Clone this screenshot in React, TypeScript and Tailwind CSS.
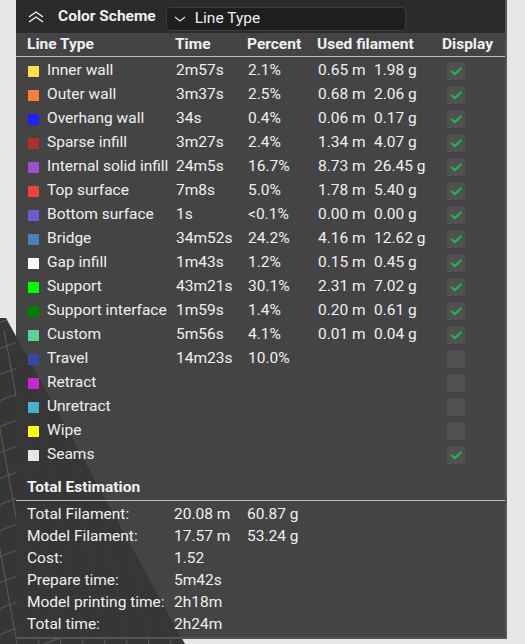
import { Check } from 'lucide-react';

interface LineRow {
    name: string;
    color: string;
    time?: string;
    percent?: string;
    meters?: string;
    grams?: string;
    shown: boolean;
}

const rows: LineRow[] = [
    { name: 'Inner wall', color: '#FFE04A', time: '2m57s', percent: '2.1%', meters: '0.65 m', grams: '1.98 g', shown: true },
    { name: 'Outer wall', color: '#FF7F38', time: '3m37s', percent: '2.5%', meters: '0.68 m', grams: '2.06 g', shown: true },
    { name: 'Overhang wall', color: '#1F1FFF', time: '34s', percent: '0.4%', meters: '0.06 m', grams: '0.17 g', shown: true },
    { name: 'Sparse infill', color: '#B03029', time: '3m27s', percent: '2.4%', meters: '1.34 m', grams: '4.07 g', shown: true },
    { name: 'Internal solid infill', color: '#9654CC', time: '24m5s', percent: '16.7%', meters: '8.73 m', grams: '26.45 g', shown: true },
    { name: 'Top surface', color: '#F04040', time: '7m8s', percent: '5.0%', meters: '1.78 m', grams: '5.40 g', shown: true },
    { name: 'Bottom surface', color: '#6D5BD0', time: '1s', percent: '<0.1%', meters: '0.00 m', grams: '0.00 g', shown: true },
    { name: 'Bridge', color: '#4D80BA', time: '34m52s', percent: '24.2%', meters: '4.16 m', grams: '12.62 g', shown: true },
    { name: 'Gap infill', color: '#FFFFFF', time: '1m43s', percent: '1.2%', meters: '0.15 m', grams: '0.45 g', shown: true },
    { name: 'Support', color: '#00FF00', time: '43m21s', percent: '30.1%', meters: '2.31 m', grams: '7.02 g', shown: true },
    { name: 'Support interface', color: '#008000', time: '1m59s', percent: '1.4%', meters: '0.20 m', grams: '0.61 g', shown: true },
    { name: 'Custom', color: '#5ED194', time: '5m56s', percent: '4.1%', meters: '0.01 m', grams: '0.04 g', shown: true },
    { name: 'Travel', color: '#3846A8', time: '14m23s', percent: '10.0%', shown: false },
    { name: 'Retract', color: '#CC22D8', shown: false },
    { name: 'Unretract', color: '#48B0D0', shown: false },
    { name: 'Wipe', color: '#FFFF00', shown: false },
    { name: 'Seams', color: '#E6E6E6', shown: true },
];

const totals = [
    { label: 'Total Filament:', value: '20.08 m', extra: '60.87 g' },
    { label: 'Model Filament:', value: '17.57 m', extra: '53.24 g' },
    { label: 'Cost:', value: '1.52' },
    { label: 'Prepare time:', value: '5m42s' },
    { label: 'Model printing time:', value: '2h18m' },
    { label: 'Total time:', value: '2h24m' },
];

const cols = 'grid grid-cols-[148px_72px_70px_56px_69px_1fr] items-center';

// build plate peeking out from under the legend, bottom-left of the viewport
function BuildPlate() {
    const lines = [];
    for (let i = 0; i < 14; i++) {
        lines.push(<line key={`a${i}`} x1={-20} y1={330 + i * 26} x2={60} y2={300 + i * 26} />);
        lines.push(<line key={`b${i}`} x1={-40 + i * 22} y1={330} x2={20 + i * 22} y2={660} />);
    }
    return (
        <svg className="absolute inset-0" width="525" height="644" viewBox="0 0 525 644">
            <defs>
                <clipPath id="plate">
                    <polygon points="0,318 6,318 185,644 0,644" />
                </clipPath>
            </defs>
            <g clipPath="url(#plate)">
                <rect x="0" y="300" width="200" height="344" fill="#363636" />
                <g stroke="#5c5c5c" strokeWidth="1">{lines}</g>
            </g>
        </svg>
    );
}

function Swatch({ color }: { color: string }) {
    return <span className="h-[11px] w-[11px] shrink-0" style={{ backgroundColor: color }} />;
}

function Toggle({ on }: { on: boolean }) {
    return (
        <span className="ml-1 flex h-[18px] w-[18px] items-center justify-center rounded-[2px] bg-[#505050]">
            {on && <Check size={13} strokeWidth={4} className="text-[#1fb24f]" />}
        </span>
    );
}

export default function App() {
    return (
        <div className="relative h-[644px] w-[525px] overflow-hidden bg-[#e7e7e7] font-['Roboto',sans-serif] text-[15.5px] text-[#f0f0f0]">
            <BuildPlate />

            <div className="relative ml-4 h-[639px] w-[491px] border-r-2 border-b-2 border-[#555555] bg-[#363636]/[0.92]">
                {/* Header: title + scheme picker */}
                <div className="flex h-[33px] items-center bg-[#262626]/80 pl-3">
                    <svg width="16" height="12" viewBox="0 0 16 12" fill="none" stroke="#f0f0f0" strokeWidth="1.4">
                        <polyline points="1,6 8,1 15,6" />
                        <polyline points="1,11 8,6 15,11" />
                    </svg>
                    <span className="ml-[14px] font-bold">Color Scheme</span>
                    <div className="mt-[4px] ml-[10px] flex h-[24px] w-[240px] items-center rounded-[4px] border border-[#3d3d3d] bg-[#1e1e1e] pl-[7px]">
                        <svg width="12" height="6" viewBox="0 0 12 6" fill="none" stroke="#e0e0e0" strokeWidth="1.2">
                            <polyline points="1,1 6,5 11,1" />
                        </svg>
                        <span className="ml-[9px]">Line Type</span>
                    </div>
                </div>

                {/* Column titles */}
                <div className={`${cols} h-[24px] border-b border-[#bdbdbd] pl-[11px] font-bold`}>
                    <span>Line Type</span>
                    <span>Time</span>
                    <span>Percent</span>
                    <span className="col-span-2">Used filament</span>
                    <span>Display</span>
                </div>

                {/* Per-feature stats */}
                <div className="pt-[2px]">
                    {rows.map((r) => (
                        <div key={r.name} className={`${cols} h-[24px] pl-[12px]`}>
                            <span className="flex items-center gap-[8px] whitespace-nowrap">
                                <Swatch color={r.color} />
                                {r.name}
                            </span>
                            <span>{r.time}</span>
                            <span>{r.percent}</span>
                            <span>{r.meters}</span>
                            <span>{r.grams}</span>
                            <Toggle on={r.shown} />
                        </div>
                    ))}
                </div>

                {/* Totals */}
                <div className="mt-[9px] flex h-[24px] items-center pl-[11px] font-bold">Total Estimation</div>
                <div className="border-t border-[#bdbdbd]" />
                <div className="pt-[2px]">
                    {totals.map((t) => (
                        <div key={t.label} className="grid h-[22px] grid-cols-[147px_73px_1fr] items-center pl-[11px]">
                            <span className="whitespace-nowrap">{t.label}</span>
                            <span>{t.value}</span>
                            <span>{t.extra}</span>
                        </div>
                    ))}
                </div>
            </div>
        </div>
    );
}
